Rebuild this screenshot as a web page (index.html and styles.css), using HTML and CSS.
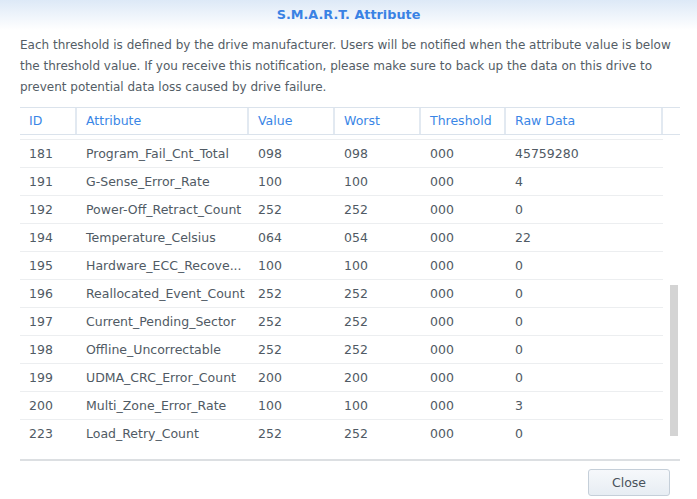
FILE: index.html
```html
<!DOCTYPE html>
<html>
<head>
<meta charset="utf-8">
<link rel="stylesheet" href="styles.css">
</head>
<body>
<div class="dialog">
  <div class="titlebar">S.M.A.R.T. Attribute</div>
  <p class="desc">Each threshold is defined by the drive manufacturer. Users will be notified when the attribute value is below the threshold value. If you receive this notification, please make sure to back up the data on this drive to prevent potential data loss caused by drive failure.</p>
  <div class="grid">
    <div class="ghead">
      <div class="c c-id">ID</div>
      <div class="c c-attr">Attribute</div>
      <div class="c c-val">Value</div>
      <div class="c c-worst">Worst</div>
      <div class="c c-thr">Threshold</div>
      <div class="c c-raw">Raw Data</div>
      <div class="c c-pad"></div>
    </div>
    <div class="gbody">
      <div class="row"><div class="c c-id">181</div><div class="c c-attr">Program_Fail_Cnt_Total</div><div class="c c-val">098</div><div class="c c-worst">098</div><div class="c c-thr">000</div><div class="c c-raw">45759280</div></div>
      <div class="row"><div class="c c-id">191</div><div class="c c-attr">G-Sense_Error_Rate</div><div class="c c-val">100</div><div class="c c-worst">100</div><div class="c c-thr">000</div><div class="c c-raw">4</div></div>
      <div class="row"><div class="c c-id">192</div><div class="c c-attr">Power-Off_Retract_Count</div><div class="c c-val">252</div><div class="c c-worst">252</div><div class="c c-thr">000</div><div class="c c-raw">0</div></div>
      <div class="row"><div class="c c-id">194</div><div class="c c-attr">Temperature_Celsius</div><div class="c c-val">064</div><div class="c c-worst">054</div><div class="c c-thr">000</div><div class="c c-raw">22</div></div>
      <div class="row"><div class="c c-id">195</div><div class="c c-attr">Hardware_ECC_Recove...</div><div class="c c-val">100</div><div class="c c-worst">100</div><div class="c c-thr">000</div><div class="c c-raw">0</div></div>
      <div class="row"><div class="c c-id">196</div><div class="c c-attr">Reallocated_Event_Count</div><div class="c c-val">252</div><div class="c c-worst">252</div><div class="c c-thr">000</div><div class="c c-raw">0</div></div>
      <div class="row"><div class="c c-id">197</div><div class="c c-attr">Current_Pending_Sector</div><div class="c c-val">252</div><div class="c c-worst">252</div><div class="c c-thr">000</div><div class="c c-raw">0</div></div>
      <div class="row"><div class="c c-id">198</div><div class="c c-attr">Offline_Uncorrectable</div><div class="c c-val">252</div><div class="c c-worst">252</div><div class="c c-thr">000</div><div class="c c-raw">0</div></div>
      <div class="row"><div class="c c-id">199</div><div class="c c-attr">UDMA_CRC_Error_Count</div><div class="c c-val">200</div><div class="c c-worst">200</div><div class="c c-thr">000</div><div class="c c-raw">0</div></div>
      <div class="row"><div class="c c-id">200</div><div class="c c-attr">Multi_Zone_Error_Rate</div><div class="c c-val">100</div><div class="c c-worst">100</div><div class="c c-thr">000</div><div class="c c-raw">3</div></div>
      <div class="row"><div class="c c-id">223</div><div class="c c-attr">Load_Retry_Count</div><div class="c c-val">252</div><div class="c c-worst">252</div><div class="c c-thr">000</div><div class="c c-raw">0</div></div>
      <div class="scrollthumb"></div>
    </div>
  </div>
  <div class="footer">
    <button class="btn">Close</button>
  </div>
</div>
</body>
</html>
```

FILE: styles.css
```css
* { box-sizing: border-box; }
html, body { margin: 0; padding: 0; background: #fff; }
body {
  font-family: "DejaVu Sans", Verdana, sans-serif;
  width: 697px;
  height: 499px;
  overflow: hidden;
}
.dialog {
  display: flex;
  flex-direction: column;
  height: 499px;
}
.titlebar {
  height: 30px;
  line-height: 29px;
  text-align: center;
  font-weight: bold;
  font-size: 12.8px;
  color: #3a82e4;
  background: linear-gradient(#dde9f7, #ffffff);
}
.desc {
  margin: 5px 20px 0 20px;
  font-size: 12px;
  line-height: 21px;
  color: #545d66;
}
.grid {
  margin: 9px 17px 0 20px;
  border-bottom: 2px solid #dcdfe2;
}
.ghead {
  display: flex;
  height: 28px;
  border-top: 1px solid #dbe3ec;
  border-bottom: 1px solid #dbe3ec;
}
.ghead .c {
  color: #3a86e6;
  line-height: 26px;
  border-right: 2px solid #e2e9f1;
}
.ghead .c-pad { flex: 1; border-right: 0; }
.c {
  font-size: 12.5px;
  padding-left: 9px;
  white-space: nowrap;
  overflow: hidden;
}
.c-id { width: 57px; }
.c-attr { width: 172px; }
.c-val { width: 86px; }
.c-worst { width: 86px; }
.c-thr { width: 85px; }
.c-raw { width: 157px; }
.gbody {
  position: relative;
  height: 324px;
  padding-top: 4px;
  padding-right: 17px;
}
.row {
  display: flex;
  height: 28px;
  border-top: 1px solid #eceef0;
}
.row .c {
  color: #505a64;
  line-height: 27px;
}
.scrollthumb {
  position: absolute;
  right: 2px;
  top: 150px;
  width: 8px;
  height: 151px;
  background: #d4d4d4;
}
.footer {
  display: flex;
  justify-content: flex-end;
  padding: 8px 27px 0 0;
}
.btn {
  width: 82px;
  height: 27px;
  font-family: "DejaVu Sans", Verdana, sans-serif;
  font-size: 12.5px;
  color: #48525c;
  background: linear-gradient(#f6f8fb, #e7edf3);
  border: 1px solid #c5cfd9;
  border-radius: 3px;
  padding: 0;
}
```
